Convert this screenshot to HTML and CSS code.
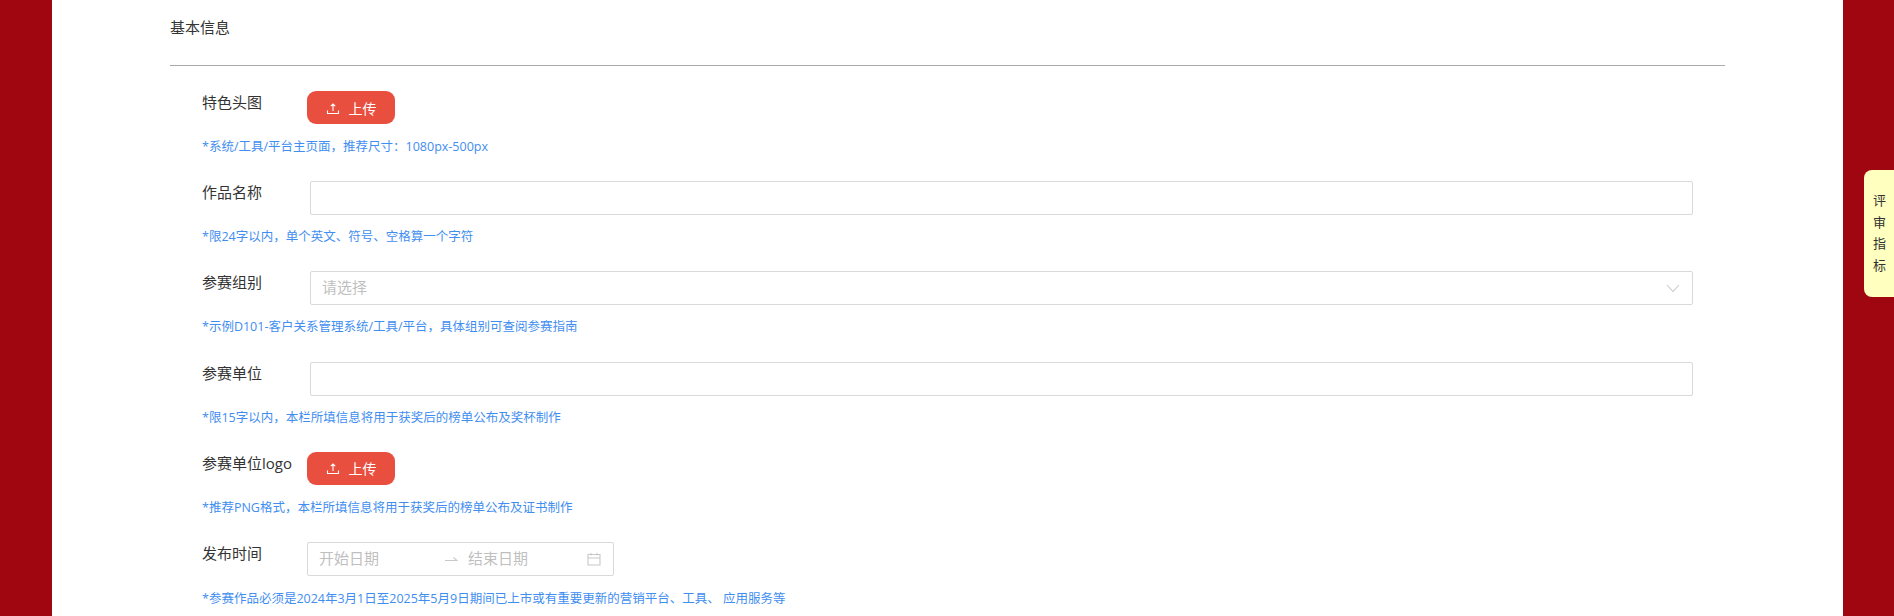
FILE: index.html
```html
<!DOCTYPE html>
<html lang="zh-CN">
<head>
  <meta charset="UTF-8">
  <title>基本信息</title>
  <link rel="stylesheet" href="styles.css">
</head>
<body>

<div class="page">
  <h2 class="section-title">基本信息</h2>

  <form class="info-form">
    <div class="row row-upload">
      <label>特色头图</label>
      <button type="button" class="upload-btn">
        <svg viewBox="0 0 14 14" width="14" height="14"><path d="M7 10V3M4.8 5.2 7 3l2.200 2.200M1.500 9.500v3h11v-3" fill="none" stroke="#fff" stroke-width="1.100"/></svg>
        <span>上传</span>
      </button>
      <p class="hint">*系统/工具/平台主页面，推荐尺寸：1080px-500px</p>
    </div>

    <div class="row">
      <label>作品名称</label>
      <input type="text" class="field">
      <p class="hint">*限24字以内，单个英文、符号、空格算一个字符</p>
    </div>

    <div class="row">
      <label>参赛组别</label>
      <div class="field select">
        <span class="placeholder">请选择</span>
        <svg viewBox="0 0 14 9" width="14" height="9"><path d="M1 1l6 6.500L13 1" fill="none" stroke="#c8c8c8" stroke-width="1.100"/></svg>
      </div>
      <p class="hint">*示例D101-客户关系管理系统/工具/平台，具体组别可查阅参赛指南</p>
    </div>

    <div class="row">
      <label>参赛单位</label>
      <input type="text" class="field">
      <p class="hint">*限15字以内，本栏所填信息将用于获奖后的榜单公布及奖杯制作</p>
    </div>

    <div class="row row-upload">
      <label>参赛单位logo</label>
      <button type="button" class="upload-btn">
        <svg viewBox="0 0 14 14" width="14" height="14"><path d="M7 10V3M4.8 5.2 7 3l2.200 2.200M1.500 9.500v3h11v-3" fill="none" stroke="#fff" stroke-width="1.100"/></svg>
        <span>上传</span>
      </button>
      <p class="hint">*推荐PNG格式，本栏所填信息将用于获奖后的榜单公布及证书制作</p>
    </div>

    <div class="row row-upload">
      <label>发布时间</label>
      <div class="date-range">
        <span class="placeholder date-start">开始日期</span>
        <svg class="date-arrow" viewBox="0 0 14 8" width="14" height="8"><path d="M1 5.500h12L9.500 2.500" fill="none" stroke="#c8c8c8" stroke-width="1.100"/></svg>
        <span class="placeholder date-end">结束日期</span>
        <svg viewBox="0 0 14 14" width="14" height="14"><path d="M1 2.500h12v10.500H1zM1 6h12M4 1v2.500M10 1v2.500" fill="none" stroke="#c8c8c8" stroke-width="1.100"/></svg>
      </div>
      <p class="hint">*参赛作品必须是2024年3月1日至2025年5月9日期间已上市或有重要更新的营销平台、工具、 应用服务等</p>
    </div>
  </form>
</div>

<div class="side-tab">
  <span>评</span>
  <span>审</span>
  <span>指</span>
  <span>标</span>
</div>

</body>
</html>
```

FILE: styles.css
```css
* { box-sizing: border-box; margin: 0; padding: 0; }
html, body {
  height: 616px;
  overflow: hidden;
  background: #a0060f;
  font-family: "Open Sans", "Noto Sans CJK SC", sans-serif;
  color: #333;
}
.page {
  margin: 0 51px 0 52px;
  height: 616px;
  background: #fff;
  padding: 0 118px 0 118px;
}
.section-title {
  height: 66px;
  padding-top: 16px;
  font-size: 15px;
  font-weight: 400;
  line-height: 22px;
  border-bottom: 1px solid #aaa;
}
.info-form {
  padding: 25px 32px 0;
}
.row {
  display: grid;
  grid-template-columns: 105px 1fr;
  align-content: start;
  height: 90.2px;
}
.row label {
  font-size: 15px;
  line-height: 22px;
}
.field {
  display: block;
  height: 34px;
  margin-left: 3px;
  border: 1px solid #d9d9d9;
  border-radius: 2px;
  background: #fff;
  outline: none;
}
.select {
  display: flex;
  align-items: center;
  justify-content: space-between;
  padding: 0 12px 0 11px;
}
.placeholder {
  font-size: 15px;
  line-height: 22px;
  margin-top: -2px;
  color: #bfbfbf;
}
.hint {
  grid-column: 1 / 3;
  font-size: 12.500px;
  line-height: 18px;
  color: #3f8ef0;
  margin-top: 13px;
}
.row-upload .hint {
  margin-top: 14px;
}
.upload-btn {
  display: flex;
  align-items: center;
  justify-content: center;
  gap: 9px;
  width: 88px;
  height: 33px;
  background: #e94f3f;
  border: none;
  border-radius: 9px;
  color: #fff;
  font-family: inherit;
  font-size: 14px;
}
.date-range {
  display: flex;
  align-items: center;
  width: 307px;
  height: 34px;
  border: 1px solid #d9d9d9;
  border-radius: 2px;
  padding: 0 12px 0 11px;
}
.date-start {
  width: 125px;
}
.date-arrow {
  margin-right: 10px;
}
.date-end {
  flex: 1;
}
.side-tab {
  position: fixed;
  top: 170px;
  right: 0;
  width: 30px;
  height: 127px;
  padding: 20px 0 0 1px;
  background: #ffffc0;
  border-radius: 8px 0 0 8px;
  display: flex;
  flex-direction: column;
  align-items: center;
  font-size: 13px;
  line-height: 21.500px;
  color: #333;
}
```
